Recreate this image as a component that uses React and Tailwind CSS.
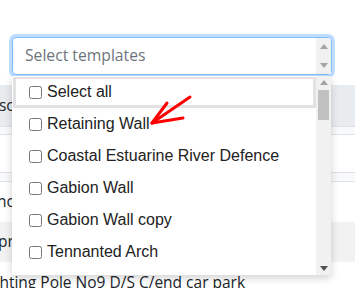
import React from 'react'

const items = ['Select all', 'Retaining Wall', 'Coastal Estuarine River Defence', 'Gabion Wall', 'Gabion Wall copy', 'Tennanted Arch']

function UpArrow({ color = '#a3a3a3' }) {
  return (
    <svg width="8" height="5" viewBox="0 0 8 5"><polygon points="4,0 8,5 0,5" fill={color} /></svg>
  )
}

function DownArrow({ color = '#a3a3a3' }) {
  return (
    <svg width="8" height="5" viewBox="0 0 8 5"><polygon points="0,0 8,0 4,5" fill={color} /></svg>
  )
}

export default function App() {
  return (
    <div className="relative w-[355px] h-[288px] overflow-hidden bg-white font-['Open_Sans',sans-serif] text-[#212529]">
      {/* select box */}
      <div className="h-[85px] pt-[37px] pl-[12px]">
        <div className="w-[320px] h-[38px] flex border border-[#80bdff] rounded-[4px] shadow-[0_0_0_3px_rgba(0,123,255,0.25)] bg-white">
          <div className="flex-1 pl-[12px] flex items-center text-[15.7px] text-[#6c757d]">Select templates</div>
          <div className="w-[15px] bg-[#f1f1f1] flex flex-col items-center justify-between py-[6px] rounded-tr-[3px]">
            <UpArrow />
            <DownArrow />
          </div>
        </div>
      </div>

      {/* table behind */}
      <div className="text-[15.5px] leading-none">
        <div className="h-[42px] bg-[#e9ecef] flex items-center border-b border-[#dee2e6]">
          <span className="-ml-[21px]">Desc</span>
        </div>
        <div className="h-[8px] bg-[#f8f9fa] border-b border-[#dee2e6]" />
        <div className="h-[37px]" />
        <div className="h-[10px] bg-[#f8f9fa] border-t border-b border-[#dee2e6]" />
        <div className="h-[40px] flex items-center">
          <span className="-ml-[3px]">no</span>
        </div>
        <div className="h-[40px] bg-[#f2f2f2] flex items-center">
          <span className="-ml-[2px]">pro</span>
        </div>
        <div className="h-[42px] flex items-center whitespace-nowrap">
          <span className="-ml-[21px]">Lighting Pole No9 D/S C/end car park</span>
        </div>
      </div>

      {/* dropdown list */}
      <div className="absolute left-[12px] top-[76px] w-[319px] h-[199px] bg-white flex shadow-[0_3px_8px_rgba(0,0,0,0.18)] font-['Liberation_Sans',Arial,sans-serif] text-[16px] text-[#222]">
        <div className="flex-1 flex flex-col pt-[1px]">
          {items.map((t, i) => (
            <div
              key={t}
              className={
                i === 0
                  ? 'h-[31px] flex items-center pl-[13px] gap-[5px] border-[3px] border-t-[2px] border-[#e2e2e2] ml-[1px]'
                  : 'h-[32px] flex items-center pl-[17px] gap-[5px]'
              }
            >
              <input type="checkbox" readOnly className="m-0 w-[13px] h-[13px]" />
              <span>{t}</span>
            </div>
          ))}
        </div>
        <div className="w-[15px] bg-[#f1f1f1] flex flex-col items-center pt-[4px] pb-[4px]">
          <UpArrow />
          <div className="w-[11px] h-[30px] bg-[#c1c1c1] mt-[5px]" />
          <div className="flex-1" />
          <DownArrow color="#505050" />
        </div>
      </div>

      {/* red annotation arrow */}
      <svg className="absolute left-0 top-0 pointer-events-none" width="355" height="288">
        <g stroke="#ff0000" strokeWidth="3" strokeLinecap="round" fill="none">
          <line x1="190" y1="97" x2="152" y2="123" />
          <line x1="152" y1="123" x2="167" y2="103" />
          <line x1="152" y1="123" x2="183" y2="118" />
        </g>
      </svg>
    </div>
  )
}
